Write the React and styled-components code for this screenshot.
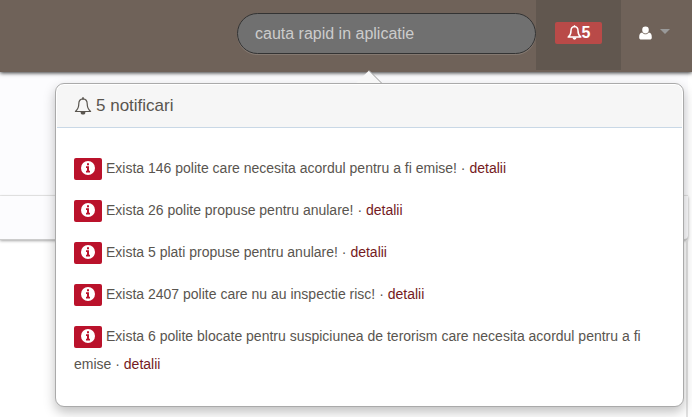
// Packages
import React, { useState } from "react"
import styled, { createGlobalStyle } from "styled-components"

// Styles
const Colors = {
    Brown: "#6f6259",
    BrownDark: "#61574f",
    Text: "#59554f",
    Link: "#741a22",
    Danger: "#b94a48",
    Red: "#ba122b",
}

const GlobalStyles = createGlobalStyle`
    * {
        box-sizing: border-box;
    }

    body {
        margin: 0;
        background-color: #ffffff;
        color: ${Colors.Text};
        font-family: "Liberation Sans", Arial, sans-serif;
        font-size: 14px;
        line-height: 28px;
    }
`

const Page = styled.div`
    position: relative;
    min-height: 100vh;
    display: flex;
    flex-direction: column;
`

const Navbar = styled.header`
    position: relative;
    z-index: 1;
    height: 72px;
    display: flex;
    justify-content: flex-end;
    align-items: flex-start;
    background-color: ${Colors.Brown};
    box-shadow: 0 1px 4px rgba(0, 0, 0, 0.8);
`

const Search = styled.input`
    width: 299px;
    height: 41px;
    margin-top: 13px;
    padding: 0 17px;
    border: 1px solid #333333;
    border-radius: 21px;
    background-color: #707070;
    box-shadow: 0 1px 0 rgba(255, 255, 255, 0.15);
    color: #cccccc;
    font-family: inherit;
    font-size: 16px;
    outline: none;

    &::placeholder {
        color: #cccccc;
        opacity: 1;
    }
`

const NavButton = styled.button`
    width: ${(props) => props.$width};
    height: 70px;
    padding: 0 0 4px;
    border: 0;
    display: flex;
    align-items: center;
    justify-content: center;
    gap: 8px;
    background-color: ${(props) =>
        props.$active ? Colors.BrownDark : "transparent"};
    cursor: pointer;
`

const UserButton = styled(NavButton)`
    padding-right: 4px;
`

const Badge = styled.span`
    width: 47px;
    height: 22px;
    padding-bottom: 1px;
    border-radius: 2px;
    display: flex;
    align-items: center;
    justify-content: center;
    background-color: ${Colors.Danger};
    color: #ffffff;
    font-family: "Liberation Sans", Arial, sans-serif;
    font-size: 16px;
    font-weight: bold;
`

const Caret = styled.span`
    margin-bottom: 3px;
    border: 5px solid transparent;
    border-top-color: #999999;
    border-bottom: 0;
`

const Strip = styled.div`
    height: ${(props) => props.$height};
    margin-right: 4px;
    background-color: #fcfcfe;
    border-bottom: 1px solid #ebebeb;
`

const TabStrip = styled(Strip)`
    border-bottom-color: #cccccc;
    border-bottom-right-radius: 4px;
    box-shadow: 0 1px 3px rgba(0, 0, 0, 0.35);
`

const Content = styled.main`
    flex: 1;
    margin-right: 4px;
    border-right: 2px solid #e2e2e2;
`

const Popover = styled.section`
    position: absolute;
    z-index: 2;
    top: 83px;
    left: 55px;
    right: 8px;
    padding: 1px;
    border: 1px solid #aaaaaa;
    border-radius: 9px;
    background-color: #ffffff;
    box-shadow: 0 5px 12px rgba(0, 0, 0, 0.25);
`

const Arrow = styled.svg`
    position: absolute;
    bottom: 100%;
    left: 50%;
    width: 26px;
    height: 13px;
    margin: 0 0 1px -14px;
`

const Title = styled.h3`
    height: 43px;
    margin: 0;
    padding: 0 17px;
    border-bottom: 1px solid #c9d8e6;
    border-radius: 7px 7px 0 0;
    display: flex;
    align-items: center;
    gap: 4px;
    background-color: #f6f6f6;
    font-size: 17px;
    font-weight: normal;
`

const List = styled.ul`
    margin: 0;
    padding: 26px 17px 27px;
    list-style: none;
    display: grid;
    gap: 14px;
`

const Label = styled.span`
    width: 28px;
    height: 22px;
    margin-right: 4px;
    padding-bottom: 2px;
    border-radius: 2px;
    display: inline-flex;
    align-items: center;
    justify-content: center;
    vertical-align: middle;
    background-color: ${Colors.Red};
    color: #ffffff;
`

const Link = styled.a`
    color: ${Colors.Link};
    text-decoration: none;
`

const notifications = [
    "Exista 146 polite care necesita acordul pentru a fi emise!",
    "Exista 26 polite propuse pentru anulare!",
    "Exista 5 plati propuse pentru anulare!",
    "Exista 2407 polite care nu au inspectie risc!",
    "Exista 6 polite blocate pentru suspiciunea de terorism care necesita acordul pentru a fi emise",
]

function Bell({ size, stroke }) {
    return (
        <svg width={size} height={size} viewBox="0 0 18 18" aria-hidden="true">
            <path
                d="M9 1.800C6.200 2 4.800 4.100 4.800 6.800c0 3.600-1.100 5.900-3.400 7.700h15.200c-2.300-1.800-3.400-4.100-3.400-7.700C13.200 4.100 11.800 2 9 1.800z"
                fill="none"
                stroke="currentColor"
                strokeWidth={stroke}
                strokeLinejoin="round"
            />
            <path d="M9 0.300v2" stroke="currentColor" strokeWidth="1.600" />
            <path d="M6.600 15h4.800a2.400 2.600 0 0 1-4.800 0z" fill="currentColor" />
        </svg>
    )
}

function Info() {
    return (
        <svg width="14" height="14" viewBox="0 0 14 14" aria-hidden="true">
            <circle cx="7" cy="7" r="7" fill="#ffffff" />
            <path
                d="M6 2.200h2v2H6zM5 5.300h3v4.500h1v1.700H5V9.800h1V7H5z"
                fill={Colors.Red}
            />
        </svg>
    )
}

function User() {
    return (
        <svg width="13" height="14" viewBox="0 0 13 14" aria-hidden="true">
            <path
                d="M6.500 0.500a3.300 3.300 0 0 1 3.300 3.400c0 2-1.400 3.600-3.300 3.600S3.200 5.900 3.200 3.900A3.300 3.300 0 0 1 6.500 0.500zM3.200 6.500c0.900 1.200 2 1.800 3.300 1.800s2.400-0.600 3.300-1.800c2.300 0.200 3 2.300 3 4.900 0 1.300-0.800 2.100-2.100 2.100H2.300C1 13.500 0.200 12.700 0.200 11.400c0-2.600 0.700-4.700 3-4.900z"
                fill="#ffffff"
            />
        </svg>
    )
}

export default function App() {
    const [isOpen, setIsOpen] = useState(true)

    return (
        <Page>
            <GlobalStyles />

            <Navbar>
                <Search
                    type="text"
                    aria-label="cauta rapid in aplicatie"
                    placeholder="cauta rapid in aplicatie"
                />
                <NavButton
                    $width="85px"
                    $active={isOpen}
                    onClick={() => setIsOpen(!isOpen)}
                >
                    <Badge>
                        <Bell size={15} stroke={1.8} />
                        {notifications.length}
                    </Badge>
                </NavButton>
                <UserButton $width="71px" aria-label="Utilizator">
                    <User />
                    <Caret />
                </UserButton>
            </Navbar>

            <Strip $height="124px" />
            <TabStrip $height="44px" />
            <Content />

            {isOpen && (
                <Popover>
                    <Arrow viewBox="0 0 26 13" aria-hidden="true">
                        <path d="M0 13L13 0.500L26 13z" fill="#f7f7f7" />
                        <path
                            d="M13 0.500L25.500 13"
                            stroke="#999999"
                            strokeWidth="1"
                        />
                    </Arrow>
                    <Title>
                        <Bell size={18} stroke={1.2} />
                        {notifications.length} notificari
                    </Title>
                    <List>
                        {notifications.map((text) => (
                            <li key={text}>
                                <Label>
                                    <Info />
                                </Label>
                                {text} · <Link href="#">detalii</Link>
                            </li>
                        ))}
                    </List>
                </Popover>
            )}
        </Page>
    )
}
